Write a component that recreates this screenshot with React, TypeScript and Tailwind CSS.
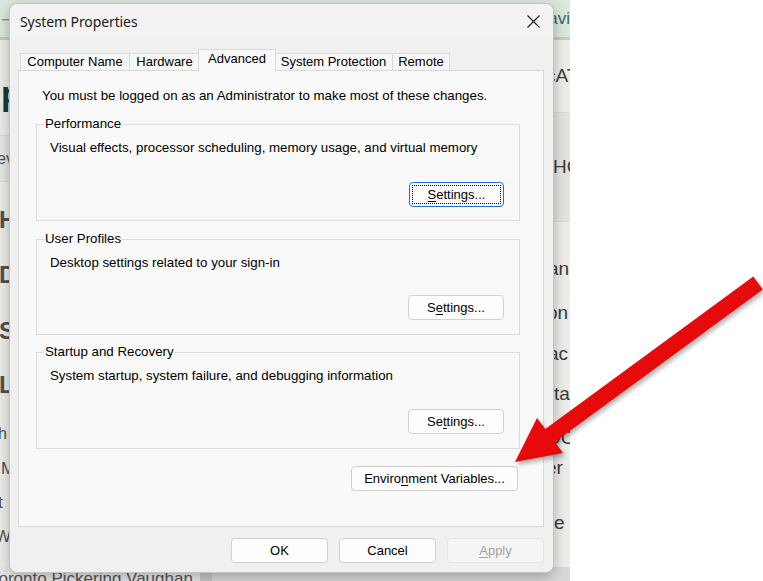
import React from "react";

function Key({ children }: { children: React.ReactNode }) {
  return <span className="underline underline-offset-[2px] decoration-1">{children}</span>;
}

function Btn({
  children,
  focused,
  disabled,
  className = "",
}: {
  children: React.ReactNode;
  focused?: boolean;
  disabled?: boolean;
  className?: string;
}) {
  if (focused) {
    return (
      <button className={`h-[25px] rounded-[4px] border border-[#1a73d9] bg-[#fdfdfd] p-[2px] text-[13px] text-black ${className}`}>
        <span className="flex h-full w-full items-center justify-center border border-dotted border-black">{children}</span>
      </button>
    );
  }
  return (
    <button
      className={`h-[25px] rounded-[4px] border text-[13px] ${
        disabled ? "border-[#e5e5e5] bg-[#f5f5f5] text-[#a3a3a3]" : "border-[#d0d0d0] bg-[#fdfdfd] text-black"
      } ${className}`}
    >
      {children}
    </button>
  );
}

function Group({
  label,
  text,
  button,
  h,
  mt,
  gap,
}: {
  label: string;
  text: string;
  button: React.ReactNode;
  h: string;
  mt: string;
  gap: string;
}) {
  return (
    <fieldset className={`border border-[#dcdcdc] ${h} ${mt}`}>
      <legend className="ml-[7px] px-px leading-[16px]">{label}</legend>
      <div className="mt-[8px] pl-[13px] leading-[16px]">{text}</div>
      <div className={`flex justify-end pr-[15px] ${gap}`}>{button}</div>
    </fieldset>
  );
}

const tabs = [
  { name: "Computer Name", w: "w-[110px]" },
  { name: "Hardware", w: "w-[71px]" },
  { name: "Advanced", w: "w-[78px]", active: true },
  { name: "System Protection", w: "w-[119px]" },
  { name: "Remote", w: "w-[58px]" },
];

function Dialog() {
  return (
    <div className="absolute left-[9px] top-[3px] flex h-[570px] w-[545px] flex-col rounded-[8px] border border-[#c4c4c4] bg-[#f0f0f0] font-['Liberation_Sans',Arial,sans-serif] text-[13px] text-black shadow-[0_4px_14px_rgba(0,0,0,0.28)]">
      <div className="flex h-[34px] items-center justify-between rounded-t-[8px] bg-[#f3f3f3] pl-[10px] pr-[13px]">
        <span className="font-['Noto_Sans',sans-serif] text-[14px] tracking-[-0.1px] text-[#1a1a1a]">System Properties</span>
        <svg width="13" height="13" viewBox="0 0 13 13" className="mt-[1px]">
          <path d="M0.5 0.5L12.5 12.5M12.5 0.5L0.5 12.5" stroke="#1a1a1a" strokeWidth="1.1" />
        </svg>
      </div>

      <div className="mt-[11px] flex h-[21px] items-end pl-[10px]">
        {tabs.map((t, i) =>
          t.active ? (
            <div
              key={t.name}
              className={`relative z-10 -mb-px -ml-[2px] -mr-[1px] flex h-[22px] items-center justify-center border border-b-0 border-[#d9d9d9] bg-[#f9f9f9] pb-[4px] ${t.w}`}
            >
              {t.name}
            </div>
          ) : (
            <div
              key={t.name}
              className={`flex h-[17px] items-center justify-center border border-b-0 border-[#d9d9d9] bg-[#f7f7f7] pb-px ${
                i > 0 ? "-ml-px" : ""
              } ${t.w}`}
            >
              {t.name}
            </div>
          )
        )}
      </div>

      <div className="ml-[8px] mr-[9px] flex h-[457px] flex-col border border-[#d9d9d9] bg-[#f9f9f9] pl-[17px] pr-[23px] text-[13.3px]">
        <div className="mt-[17px] h-[16px] pl-[6px] leading-[16px]">
          You must be logged on as an Administrator to make most of these changes.
        </div>
        <Group
          label="Performance"
          text="Visual effects, processor scheduling, memory usage, and virtual memory"
          h="h-[105px]"
          mt="mt-[12px]"
          gap="mt-[26px]"
          button={
            <Btn focused className="w-[95px]">
              <Key>S</Key>ettings...
            </Btn>
          }
        />
        <Group
          label="User Profiles"
          text="Desktop settings related to your sign-in"
          h="h-[104px]"
          mt="mt-[10px]"
          gap="mt-[24px]"
          button={
            <Btn className="w-[96px]">
              S<Key>e</Key>ttings...
            </Btn>
          }
        />
        <Group
          label="Startup and Recovery"
          text="System startup, system failure, and debugging information"
          h="h-[105px]"
          mt="mt-[9px]"
          gap="mt-[25px]"
          button={
            <Btn className="w-[96px]">
              Se<Key>t</Key>tings...
            </Btn>
          }
        />
        <div className="mt-[17px] flex justify-end pr-[2px]">
          <Btn className="w-[167px]">
            Enviro<Key>n</Key>ment Variables...
          </Btn>
        </div>
      </div>

      <div className="mt-[11px] flex justify-end gap-[11px] pr-[9px]">
        <Btn className="w-[97px]">OK</Btn>
        <Btn className="w-[97px]">Cancel</Btn>
        <Btn disabled className="w-[97px]">
          <Key>A</Key>pply
        </Btn>
      </div>
    </div>
  );
}

function Background() {
  return (
    <div className="flex h-[581px] w-[570px] flex-col overflow-hidden bg-[#ededea] font-['Liberation_Sans',Arial,sans-serif]">
      <div className="flex h-[40px] shrink-0 items-center border-b-[3px] border-[#b8d5b8] bg-[#dbe9db]">
        <span className="ml-[2px] w-[537px] text-[16px] leading-none text-[#7a8a7a]">‒</span>
        <span className="text-[17px] text-[#3f6262]">Navi</span>
      </div>

      <div className="flex flex-1">
        {/* left sliver, mostly under the dialog */}
        <div className="flex w-[40px] shrink-0 flex-col text-[#505050]">
          <div className="flex h-[95px] items-center">
            <span className="ml-[1px] mt-[10px] text-[34px] font-bold leading-none text-[#1c3838]">p</span>
          </div>
          <div className="flex h-[47px] items-center border-y border-[#dadad6] bg-[#e6e6e2]">
            <span className="-ml-[3px] text-[16px]">ev</span>
          </div>
          <div className="flex h-[50px] items-end">
            <span className="-ml-[1px] text-[24px] font-semibold leading-none">Ho</span>
          </div>
          <div className="flex h-[55px] items-end">
            <span className="-ml-[1px] text-[24px] font-semibold leading-none">Di</span>
          </div>
          <div className="flex h-[56px] items-end">
            <span className="-ml-[1px] text-[24px] font-semibold leading-none">Sp</span>
          </div>
          <div className="flex h-[54px] items-end">
            <span className="-ml-[1px] text-[24px] font-semibold leading-none">Li</span>
          </div>
          <div className="flex h-[45px] items-end">
            <span className="-ml-[2px] text-[16px] leading-none">h</span>
          </div>
          <div className="flex h-[35px] items-end">
            <span className="ml-[1px] text-[17px] leading-none">M</span>
          </div>
          <div className="flex h-[34px] items-end">
            <span className="-ml-[2px] text-[17px] leading-none">t</span>
          </div>
          <div className="flex h-[34px] items-end">
            <span className="-ml-[5px] text-[17px] leading-none">We</span>
          </div>
        </div>

        <div className="w-[509px] shrink-0" />

        {/* right sliver, between the dialog and the window edge */}
        <div className="flex w-[60px] shrink-0 flex-col text-[19px] text-[#3b3b3b]">
          <div className="flex h-[72px] items-center">
            <span className="-ml-[3px]">cAT</span>
          </div>
          <div className="flex h-[110px] items-center border-y border-[#dcdcd8] bg-[#e3e3df]">
            <span className="ml-[4px]">HO</span>
          </div>
          <div className="flex h-[56px] items-end">
            <span className="-ml-[1px] leading-none">an</span>
          </div>
          <div className="flex h-[44px] items-end">
            <span className="-ml-[2px] leading-none">on</span>
          </div>
          <div className="flex h-[41px] items-end">
            <span className="-ml-[1px] leading-none">ac</span>
          </div>
          <div className="flex h-[40px] items-end">
            <span className="ml-[5px] leading-none">ta</span>
          </div>
          <div className="flex h-[44px] items-end">
            <span className="-ml-[3px] leading-none">OC</span>
          </div>
          <div className="flex h-[30px] items-end">
            <span className="-ml-[3px] leading-none">er</span>
          </div>
          <div className="flex h-[55px] items-end">
            <span className="ml-[5px] leading-none">e</span>
          </div>
        </div>
      </div>

      <div className="flex h-[14px] shrink-0">
        <div className="w-[200px] bg-[#e9e9e9]">
          <span className="-ml-[10px] block pt-[3px] text-[17px] leading-none text-[#555]">Toronto Pickering Vaughan</span>
        </div>
        <div className="w-[12px] bg-[#c9c9c9]" />
        <div className="flex-1 bg-[#d9d9d9]" />
      </div>
    </div>
  );
}

function Arrow() {
  return (
    <svg
      className="pointer-events-none absolute left-0 top-0 drop-shadow-[2px_3px_2px_rgba(0,0,0,0.3)]"
      width="763"
      height="581"
      viewBox="0 0 763 581"
    >
      <polygon
        points="753.3,276.6 545.3,429.1 537,418 515,462 563,453 554.8,441.9 762.8,289.4"
        fill="#e60a0b"
      />
    </svg>
  );
}

export default function App() {
  return (
    <div className="relative h-[581px] w-[763px] overflow-hidden bg-white">
      <Background />
      <Dialog />
      <Arrow />
    </div>
  );
}
